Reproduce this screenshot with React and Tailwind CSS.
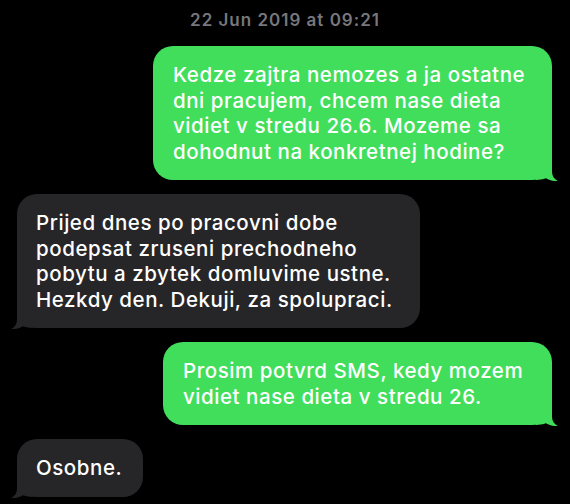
import React from "react";

function Tail({ side, color }) {
  const pos = side === "right" ? "right-[-6px] bottom-[-1px]" : "left-[-6px] bottom-[-1px] -scale-x-100";
  return (
    <svg
      className={`absolute ${pos}`}
      width="22"
      height="22"
      viewBox="0 0 22 22"
      fill={color}
    >
      <path d="M0 0 H16 V12 C16 17 18 20 22 22 C17 22.3 13 21.2 10 19.3 C7 20.6 3 21 0 21 Z" />
    </svg>
  );
}

function Bubble({ side, width, lines }) {
  const right = side === "right";
  const color = right ? "#41de5c" : "#262628";
  return (
    <div
      className={`relative rounded-[20px] py-[16px] ${right ? "self-end mr-[18px] bg-[#41de5c] pl-[20px]" : "self-start ml-[17px] bg-[#262628] pl-[19px]"} ${width}`}
    >
      <Tail side={side} color={color} />
      <div className="relative text-white text-[20.5px] leading-[25.5px] font-[550] tracking-[0.55px]">
        {lines.map((l, i) => (
          <div key={i} className="whitespace-nowrap">{l}</div>
        ))}
      </div>
    </div>
  );
}

export default function App() {
  return (
    <div
      className="w-[570px] h-[504px] bg-black overflow-hidden flex flex-col"
      style={{ fontFamily: "Inter, 'Noto Sans', sans-serif" }}
    >
      <div className="pt-[10px] text-center text-[17px] leading-[20px] font-semibold tracking-[1px] text-[#77777c]">
        22 Jun 2019 at 09:21
      </div>
      <div className="flex flex-col mt-[16px] gap-[14px]">
        <Bubble
          side="right"
          width="w-[399px]"
          lines={[
            "Kedze zajtra nemozes a ja ostatne",
            "dni pracujem, chcem nase dieta",
            "vidiet v stredu 26.6. Mozeme sa",
            "dohodnut na konkretnej hodine?",
          ]}
        />
        <Bubble
          side="left"
          width="w-[403px]"
          lines={[
            "Prijed dnes po pracovni dobe",
            "podepsat zruseni prechodneho",
            "pobytu a zbytek domluvime ustne.",
            "Hezkdy den. Dekuji, za spolupraci.",
          ]}
        />
        <Bubble
          side="right"
          width="w-[389px]"
          lines={["Prosim potvrd SMS, kedy mozem", "vidiet nase dieta v stredu 26."]}
        />
        <Bubble side="left" width="w-[126px]" lines={["Osobne."]} />
      </div>
    </div>
  );
}
